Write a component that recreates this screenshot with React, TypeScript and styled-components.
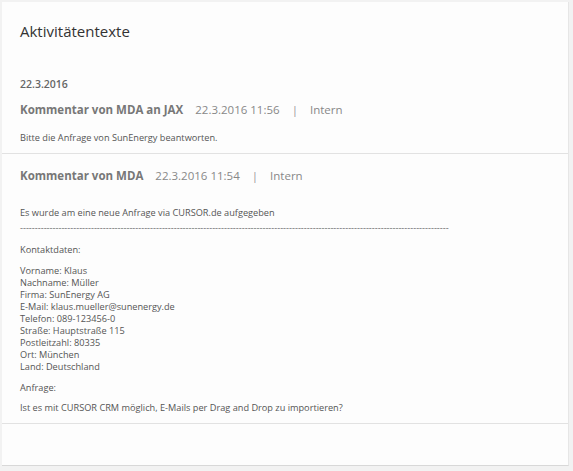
import styled, { createGlobalStyle } from 'styled-components';

const GlobalStyle = createGlobalStyle`
  html, body {
    margin: 0;
    padding: 0;
    background: #f2f2f2;
    font-family: "Open Sans", "Noto Sans", sans-serif;
  }
`;

const PageStyled = styled.div`
  padding: 2px 4px 5px 2px;
`;

const CardStyled = styled.div`
  width: 567px;
  height: 464px;
  box-sizing: border-box;
  background: #fdfdfd;
  border-right: 1px solid #e6e6e6;
  border-bottom: 1px solid #d8d8d8;
  display: flex;
  flex-direction: column;
`;

const TitleStyled = styled.h1`
  margin: 19px 0 0 18px;
  font-size: 15px;
  line-height: 20px;
  font-weight: 400;
  color: #333;
`;

const SectionStyled = styled.section<{ $top: number; $bottom: number }>`
  padding: ${(p) => p.$top}px 18px ${(p) => p.$bottom}px;
  border-bottom: 1px solid #e2e2e2;
`;

const DateStyled = styled.div`
  font-size: 10.5px;
  line-height: 14px;
  font-weight: 600;
  color: #666;
  margin-bottom: 10px;
`;

const HeaderStyled = styled.div`
  display: flex;
  align-items: center;
  font-size: 11.5px;
  line-height: 18px;
  color: #888;
`;

const AuthorStyled = styled.span`
  font-weight: 700;
  color: #777;
  margin-right: 12px;
`;

const PipeStyled = styled.span`
  margin: 0 12px;
  color: #999;
`;

const TextStyled = styled.p<{ $gap?: number }>`
  margin: ${(p) => p.$gap ?? 0}px 0 0;
  font-size: 9.2px;
  line-height: 12px;
  color: #555;
`;

const DashesStyled = styled.div`
  margin-top: 3px;
  white-space: nowrap;
  font-size: 9.2px;
  line-height: 12px;
  color: #666;
`;

const contact = [
  'Vorname: Klaus',
  'Nachname: Müller',
  'Firma: SunEnergy AG',
  'E-Mail: klaus.mueller@sunenergy.de',
  'Telefon: 089-123456-0',
  'Straße: Hauptstraße 115',
  'Postleitzahl: 80335',
  'Ort: München',
  'Land: Deutschland',
];

const App = () => {
  return (
    <PageStyled>
      <GlobalStyle />
      <CardStyled>
        <TitleStyled>Aktivitätentexte</TitleStyled>
        <SectionStyled $top={36} $bottom={9}>
          <DateStyled>22.3.2016</DateStyled>
          <HeaderStyled>
            <AuthorStyled>Kommentar von MDA an JAX</AuthorStyled>
            22.3.2016 11:56
            <PipeStyled>|</PipeStyled>
            Intern
          </HeaderStyled>
          <TextStyled $gap={13}>Bitte die Anfrage von SunEnergy beantworten.</TextStyled>
        </SectionStyled>
        <SectionStyled $top={13} $bottom={9}>
          <HeaderStyled>
            <AuthorStyled>Kommentar von MDA</AuthorStyled>
            22.3.2016 11:54
            <PipeStyled>|</PipeStyled>
            Intern
          </HeaderStyled>
          <TextStyled $gap={22}>Es wurde am eine neue Anfrage via CURSOR.de aufgegeben</TextStyled>
          <DashesStyled>{'-'.repeat(145)}</DashesStyled>
          <TextStyled $gap={10}>Kontaktdaten:</TextStyled>
          <TextStyled $gap={9}>
            {contact.map((line) => (
              <span key={line}>
                {line}
                <br />
              </span>
            ))}
          </TextStyled>
          <TextStyled $gap={9}>Anfrage:</TextStyled>
          <TextStyled $gap={8}>
            Ist es mit CURSOR CRM möglich, E-Mails per Drag and Drop zu importieren?
          </TextStyled>
        </SectionStyled>
      </CardStyled>
    </PageStyled>
  );
};

export default App;
